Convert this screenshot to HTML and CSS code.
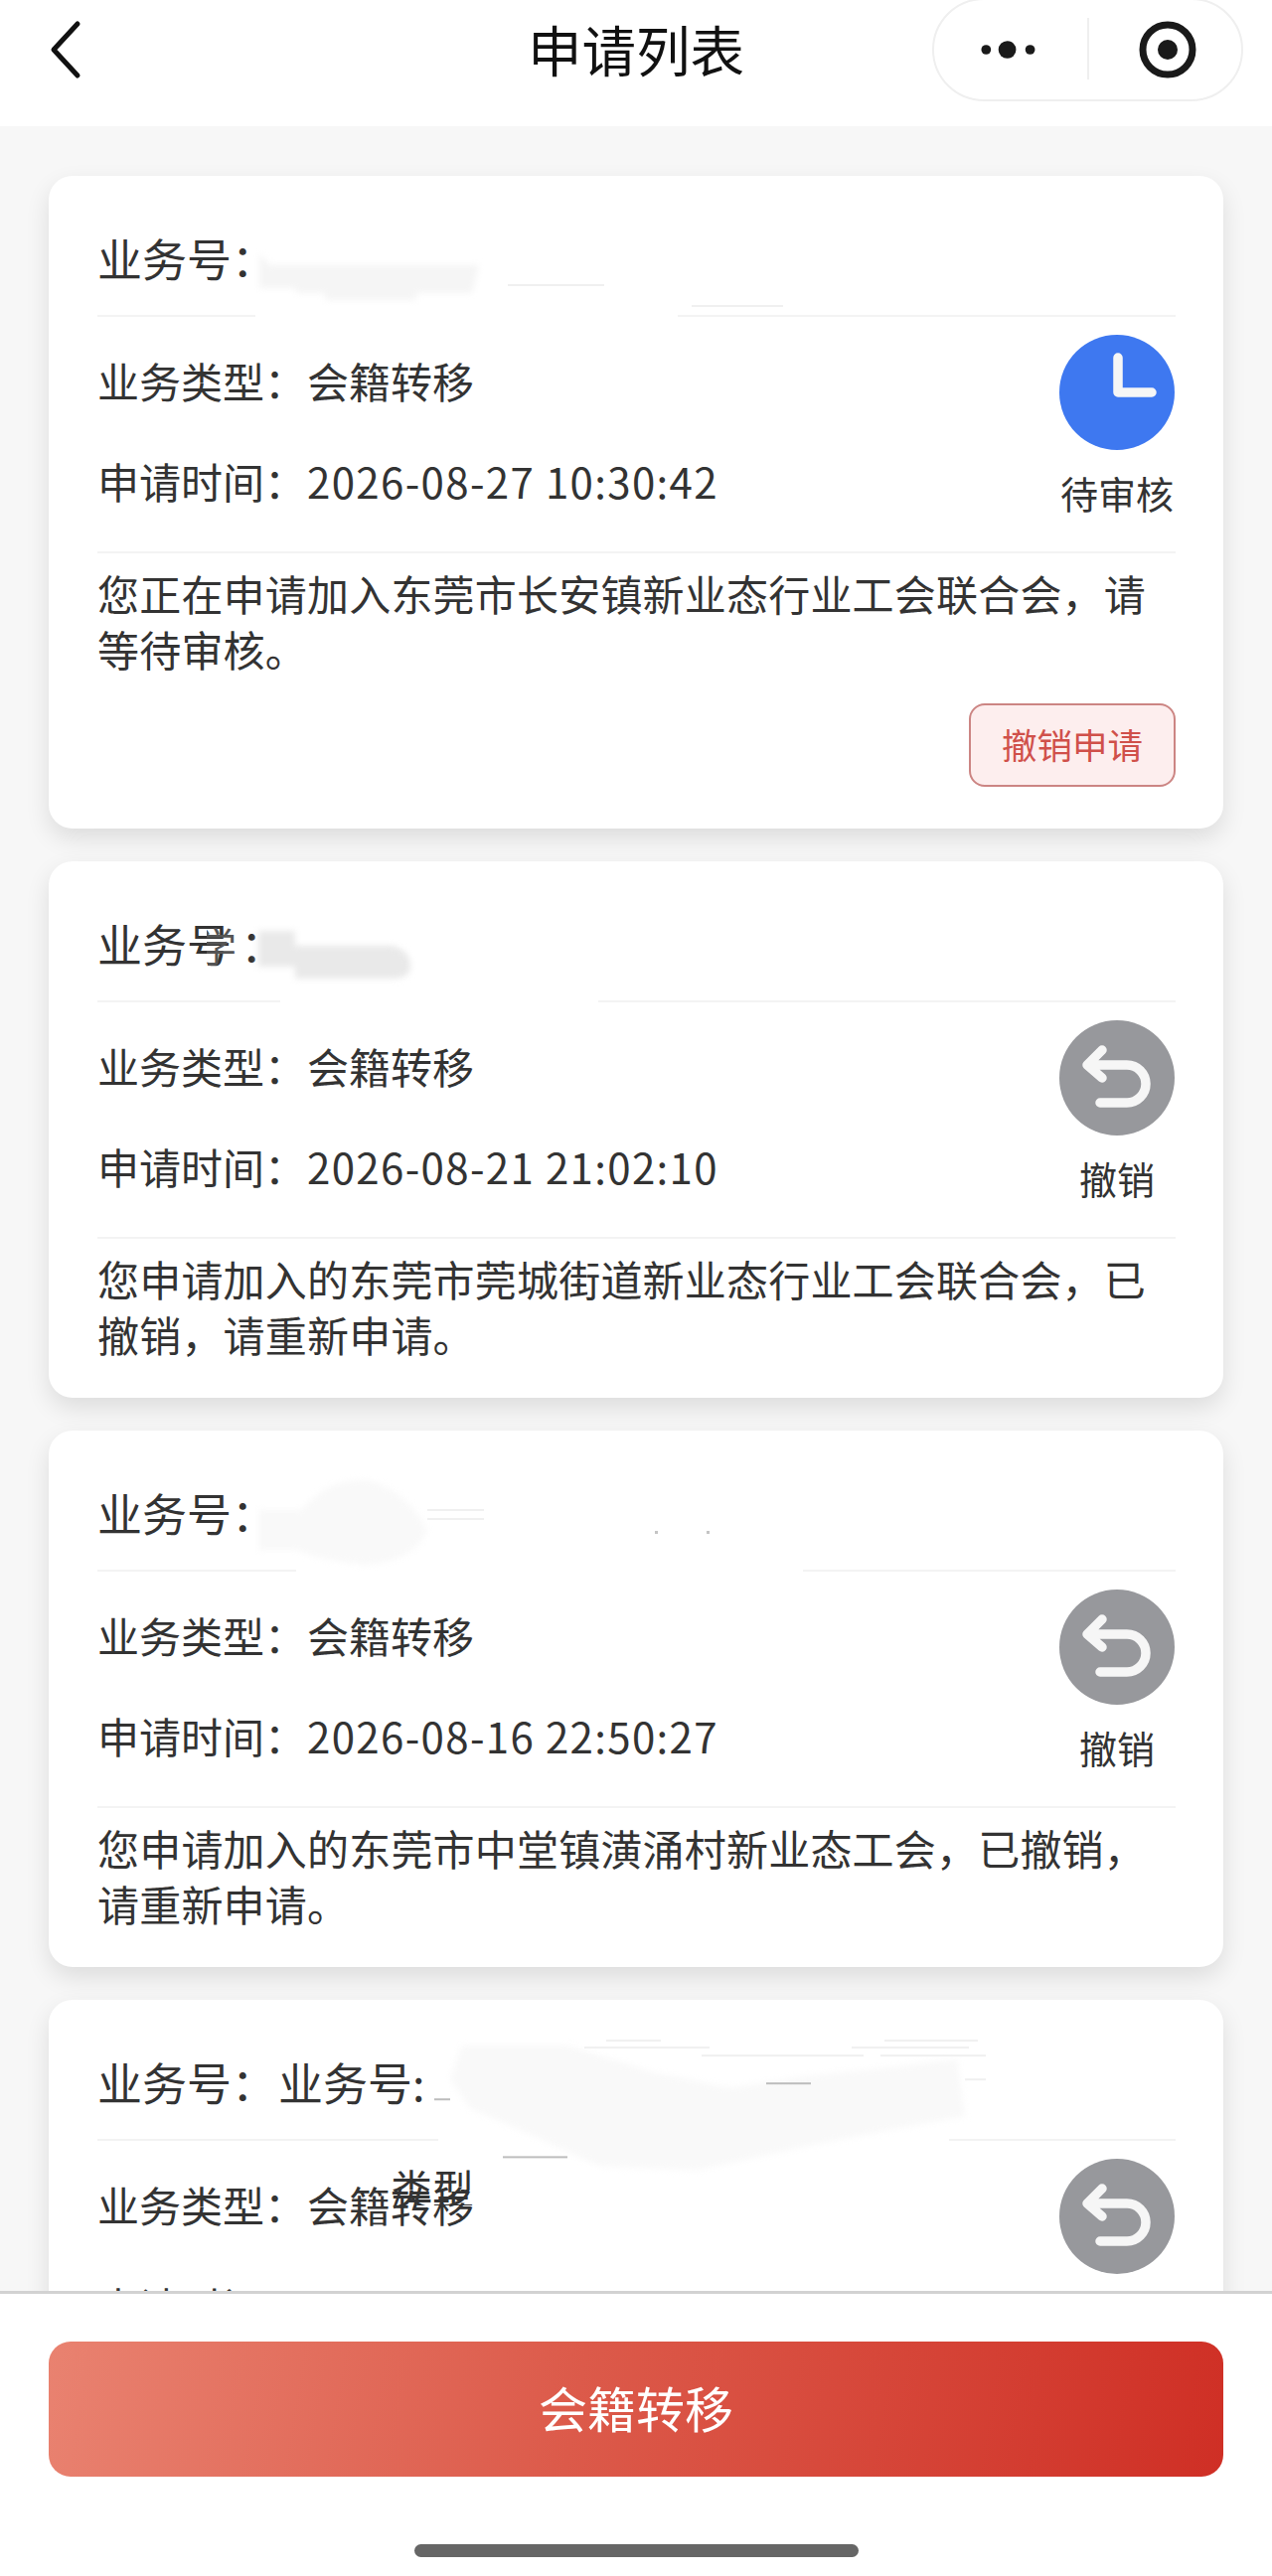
FILE: index.html
```html
<!DOCTYPE html>
<html lang="zh-CN">
<head>
<meta charset="utf-8">
<title>申请列表</title>
<link rel="stylesheet" href="styles.css">
</head>
<body>
<header class="topbar">
  <svg class="back" viewBox="0 0 40 60"><path d="M30 4 L6 30 L30 56"/></svg>
  <h1 class="title">申请列表</h1>
  <div class="capsule">
    <svg class="capsule-dots" viewBox="0 0 70 24"><circle cx="6" cy="12" r="5.5"/><circle cx="30" cy="12" r="10"/><circle cx="56" cy="12" r="5.5"/></svg>
    <span class="capsule-sep"></span>
    <svg class="capsule-target" viewBox="0 0 60 60"><circle class="ring" cx="30" cy="30" r="25"/><circle cx="30" cy="30" r="10"/></svg>
  </div>
</header>

<main class="list">
  <article class="card">
    <div class="head"><span>业务号：</span></div>
    <div class="meta">
      <div class="rows">
        <p class="row">业务类型：<span class="value">会籍转移</span></p>
        <p class="row">申请时间：<span class="value time">2026-08-27 10:30:42</span></p>
      </div>
      <div class="status">
        <svg class="status-icon" viewBox="0 0 116 116"><circle class="disc-blue" cx="58" cy="58" r="58"/><path class="glyph" d="M59 23 V58 H93"/></svg>
        <span class="status-text">待审核</span>
      </div>
    </div>
    <p class="desc">您正在申请加入东莞市长安镇新业态行业工会联合会，请等待审核。</p>
    <div class="actions"><button class="cancel">撤销申请</button></div>
    <svg class="smudge" viewBox="0 0 1182 657" preserveAspectRatio="none">
      <rect class="wipe" x="208" y="125" width="425" height="30"/>
      <path class="blot" d="M212 78 L222 90 H433 L426 118 H370 V125 H278 V118 H249 V113 H212 Z"/>
      <rect class="trace" x="462" y="109" width="97" height="2"/>
      <rect class="trace" x="647" y="130" width="92" height="2"/>
    </svg>
  </article>

  <article class="card">
    <div class="head"><span>业务号</span><span class="colon-shift">：</span></div>
    <div class="meta">
      <div class="rows">
        <p class="row">业务类型：<span class="value">会籍转移</span></p>
        <p class="row">申请时间：<span class="value time">2026-08-21 21:02:10</span></p>
      </div>
      <div class="status">
        <svg class="status-icon" viewBox="0 0 116 116"><circle class="disc-gray" cx="58" cy="58" r="58"/><path class="glyph" d="M43 30 L28 45 L43 58 M28 45 H68 A19 19 0 0 1 68 83 H41"/></svg>
        <span class="status-text">撤销</span>
      </div>
    </div>
    <p class="desc">您申请加入的东莞市莞城街道新业态行业工会联合会，已撤销，请重新申请。</p>
    <svg class="smudge" viewBox="0 0 1182 540" preserveAspectRatio="none">
      <rect class="wipe" x="233" y="125" width="320" height="30"/>
      <path class="blot-dark" d="M211 70 H248 V85 H346 Q364 90 364 105 Q364 118 346 118 H248 V106 H211 Z"/>
    </svg>
    <span class="ghost-frag">学</span>
  </article>

  <article class="card">
    <div class="head"><span>业务号：</span></div>
    <div class="meta">
      <div class="rows">
        <p class="row">业务类型：<span class="value">会籍转移</span></p>
        <p class="row">申请时间：<span class="value time">2026-08-16 22:50:27</span></p>
      </div>
      <div class="status">
        <svg class="status-icon" viewBox="0 0 116 116"><circle class="disc-gray" cx="58" cy="58" r="58"/><path class="glyph" d="M43 30 L28 45 L43 58 M28 45 H68 A19 19 0 0 1 68 83 H41"/></svg>
        <span class="status-text">撤销</span>
      </div>
    </div>
    <p class="desc">您申请加入的东莞市中堂镇潢涌村新业态工会，已撤销，请重新申请。</p>
    <svg class="smudge" viewBox="0 0 1182 540" preserveAspectRatio="none">
      <rect class="wipe" x="249" y="125" width="510" height="30"/>
      <path class="blot-light" d="M211 80 H255 Q280 48 320 50 Q360 60 381 100 Q370 130 320 135 Q270 130 250 120 H211 Z"/>
      <rect class="trace" x="381" y="79" width="57" height="2"/>
      <rect class="trace" x="381" y="88" width="57" height="2"/>
      <rect class="speck" x="610" y="101" width="3" height="3"/>
      <rect class="speck" x="662" y="101" width="3" height="3"/>
    </svg>
  </article>

  <article class="card">
    <div class="head"><span>业务号：</span><span class="dup">业务号:</span></div>
    <div class="meta">
      <div class="rows">
        <p class="row">业务类型：<span class="value">会籍转移</span></p>
        <p class="row row-low">申请时间</p>
      </div>
      <div class="status">
        <svg class="status-icon" viewBox="0 0 116 116"><circle class="disc-gray" cx="58" cy="58" r="58"/><path class="glyph" d="M43 30 L28 45 L43 58 M28 45 H68 A19 19 0 0 1 68 83 H41"/></svg>
        <span class="status-text">撤销</span>
      </div>
    </div>
    <svg class="smudge" viewBox="0 0 1182 416" preserveAspectRatio="none">
      <rect class="wipe" x="392" y="125" width="514" height="30"/>
      <path class="blot-light" d="M404 80 L416 46 H522 L604 72 L686 89 L767 76 L849 68 L914 60 L922 117 L849 130 L767 146 L653 171 L555 167 L482 134 L424 109 Z"/>
      <rect class="trace-strong" x="722" y="83" width="45" height="2"/>
      <rect class="trace-strong" x="457" y="157" width="65" height="2"/>
      <rect class="trace-strong" x="388" y="99" width="16" height="2"/>
      <rect class="trace" x="561" y="40" width="55" height="2"/>
      <rect class="trace" x="841" y="40" width="94" height="2"/>
      <rect class="trace" x="539" y="47" width="126" height="2"/>
      <rect class="trace" x="808" y="47" width="118" height="2"/>
      <rect class="trace" x="657" y="55" width="163" height="2"/>
      <rect class="trace" x="837" y="55" width="106" height="2"/>
      <rect class="trace" x="922" y="79" width="21" height="2"/>
    </svg>
    <span class="ghost-type">类型</span>
  </article>
</main>

<footer class="footer">
  <button class="transfer">会籍转移</button>
  <div class="home-bar"></div>
</footer>
</body>
</html>
```

FILE: styles.css
```css
* { box-sizing: border-box; }
html, body { margin: 0; padding: 0; }
body {
  width: 1280px;
  height: 2593px;
  overflow: hidden;
  display: flex;
  flex-direction: column;
  background: #f7f7f7;
  color: #333;
  font-family: "Noto Sans CJK SC", "Noto Sans", sans-serif;
}

.topbar {
  position: relative;
  flex: 0 0 127px;
  height: 127px;
  background: #fff;
  display: flex;
  align-items: center;
  justify-content: center;
}
.title {
  margin: 0 0 30px;
  font-size: 54.5px;
  line-height: 72px;
  font-weight: 400;
  color: #111;
}
.back {
  position: absolute;
  left: 48px;
  top: 20px;
  width: 40px;
  height: 60px;
  fill: none;
  stroke: #111;
  stroke-width: 5;
  stroke-linecap: round;
  stroke-linejoin: round;
}
.capsule {
  position: absolute;
  left: 938px;
  top: -2px;
  width: 313px;
  height: 104px;
  border: 2px solid #efefef;
  border-radius: 52px;
  background: #fff;
}
.capsule-dots {
  position: absolute;
  left: 47px;
  top: 38px;
  width: 62px;
  height: 24px;
  fill: #1a1a1a;
}
.capsule-sep {
  position: absolute;
  left: 154px;
  top: 18px;
  width: 2px;
  height: 62px;
  background: #efefef;
}
.capsule-target {
  position: absolute;
  left: 205px;
  top: 20px;
  width: 60px;
  height: 60px;
  fill: #1a1a1a;
}
.capsule-target .ring {
  fill: none;
  stroke: #1a1a1a;
  stroke-width: 7;
}

.list {
  flex: 1 1 auto;
  min-height: 0;
  overflow: hidden;
  padding: 50px 49px 0;
  display: flex;
  flex-direction: column;
  gap: 33px;
}
.card {
  position: relative;
  flex: 0 0 auto;
  background: #fff;
  border-radius: 24px;
  padding: 0 48px 36px 49px;
  box-shadow: 0 10px 24px rgba(0, 0, 0, 0.11);
}
.head {
  padding: 55px 0 29px;
  border-bottom: 2px solid #f3f3f3;
  font-size: 45px;
  line-height: 56px;
  white-space: nowrap;
}
.colon-shift { margin-left: 9px; }
.dup { margin-left: 2px; }
.meta {
  display: flex;
  justify-content: space-between;
  align-items: flex-start;
  padding-bottom: 43px;
  border-bottom: 2px solid #f3f3f3;
}
.rows {
  padding-top: 36px;
  display: flex;
  flex-direction: column;
  gap: 45px;
}
.row {
  margin: 0;
  font-size: 42px;
  line-height: 56px;
  white-space: nowrap;
}
.row-low { margin-top: 1px; }
.value { margin-left: 1px; }
.time { letter-spacing: 1.35px; }
.status {
  width: 116px;
  margin: 18px 1px -40px 0;
  display: flex;
  flex-direction: column;
  align-items: center;
}
.status-icon { width: 116px; height: 116px; display: block; }
.disc-blue { fill: #3e78f0; }
.disc-gray { fill: #97989c; }
.glyph {
  fill: none;
  stroke: #f6f6f6;
  stroke-width: 9.5;
  stroke-linecap: round;
  stroke-linejoin: round;
}
.status-text {
  margin-top: 23px;
  font-size: 38px;
  line-height: 40px;
  white-space: nowrap;
}
.desc {
  margin: 12px 0 0;
  font-size: 42px;
  line-height: 56px;
  letter-spacing: 0.2px;
}
.actions {
  display: flex;
  justify-content: flex-end;
  margin: 27px 0 6px;
}
.cancel {
  width: 208px;
  height: 84px;
  padding: 0 0 3px;
  border: 2px solid #cc8583;
  border-radius: 16px;
  background: #fdeeee;
  color: #d0504a;
  font: inherit;
  font-size: 35.5px;
  line-height: 1;
}

.smudge {
  position: absolute;
  left: 0;
  top: 0;
  width: 100%;
  height: 100%;
  pointer-events: none;
}
.wipe { fill: #fff; }
.blot { fill: #f5f5f5; filter: blur(3px); }
.blot-dark { fill: #e9e9e9; filter: blur(3px); }
.blot-light { fill: #f9f9f9; filter: blur(3px); }
.trace { fill: #f0f0f0; }
.trace-strong { fill: #bdbdbd; }
.speck { fill: #c4c4c4; }
.ghost-type {
  position: absolute;
  left: 344px;
  top: 167px;
  height: 40px;
  overflow: hidden;
  font-size: 42px;
  line-height: 44px;
  color: #333;
}
.ghost-frag {
  position: absolute;
  left: 159px;
  top: 62px;
  width: 32px;
  height: 44px;
  overflow: hidden;
  font-size: 40px;
  line-height: 44px;
  text-indent: -10px;
  color: #555;
}

.footer {
  flex: 0 0 287px;
  height: 287px;
  position: relative;
  background: #fff;
  border-top: 3px solid #d2d2d2;
  padding: 48px 49px 0;
}
.transfer {
  display: block;
  width: 100%;
  height: 136px;
  padding: 0 0 6px;
  border: 0;
  border-radius: 22px;
  background: linear-gradient(100deg, #e98270 0%, #dc5a4a 45%, #cf2f25 100%);
  color: #fff;
  font: inherit;
  font-size: 49px;
  line-height: 1;
}
.home-bar {
  width: 447px;
  height: 13px;
  margin: 68px auto 0;
  border-radius: 7px;
  background: #666;
}
```
